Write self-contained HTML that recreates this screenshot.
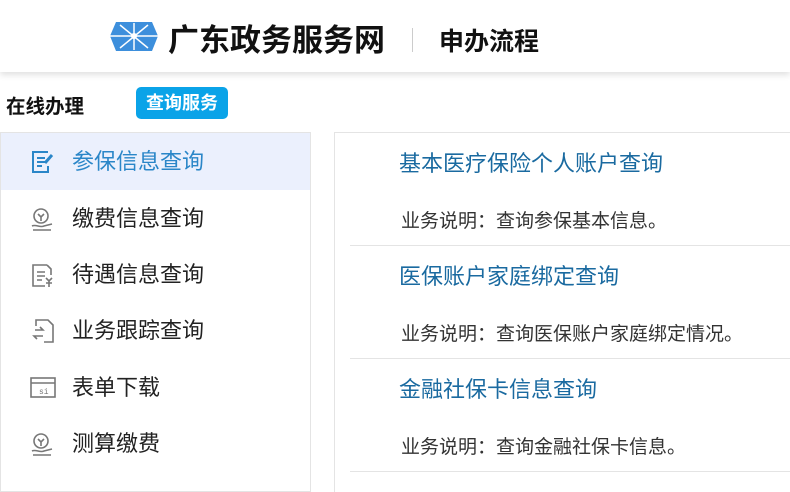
<!DOCTYPE html>
<html><head><meta charset="utf-8"><style>
*{margin:0;padding:0;box-sizing:border-box}
body{width:790px;height:477px;overflow:hidden;background:#fff;font-family:"Liberation Sans","Noto Sans CJK SC",sans-serif;position:relative}
.hdr{position:absolute;left:0;top:0;width:790px;height:72px;background:#fff;box-shadow:0 3px 6px rgba(0,0,0,.12)}
.t1{position:absolute;left:168px;top:15px;font-size:31px;font-weight:bold;color:#111;white-space:nowrap}
.sep{position:absolute;left:412px;top:28px;width:1px;height:24px;background:#ccc}
.t2{position:absolute;left:439px;top:22px;font-size:25px;font-weight:bold;color:#111;white-space:nowrap}
.zx{position:absolute;left:6px;top:90px;font-size:19.5px;font-weight:bold;color:#111}
.badge{position:absolute;left:136px;top:87px;width:92px;height:32px;background:#0aa3e8;border-radius:5px;color:#fff;font-weight:bold;font-size:18px;line-height:32px;text-align:center}
.left{position:absolute;left:0;top:132px;width:311px;height:360px;border:1px solid #e4e4e4}
.item{position:absolute;left:0;width:309px;height:57px;font-size:22px;color:#222;line-height:57px}
.item span{position:absolute;left:71px;white-space:nowrap}
.item svg{position:absolute;left:29px;top:16px}
.act{background:#ebf0fd;color:#2a86c8}
.right{position:absolute;left:334px;top:132px;width:470px;height:360px;border-left:1px solid #e4e4e4;border-top:1px solid #e4e4e4}
.row{position:absolute;left:15px;width:460px;height:113px;border-bottom:1px solid #e4e4e4}
.row .a{position:absolute;left:49px;top:13px;font-size:22px;color:#1a6aa0;white-space:nowrap}
.row .b{position:absolute;left:51px;top:73px;font-size:19px;color:#333;white-space:nowrap}
</style></head><body>
<div class="hdr">
<svg style="position:absolute;left:110px;top:22px" width="48" height="29" viewBox="0 0 48 29">
<polygon points="6,0 42,0 48,14 42,29 6,29 0,14" fill="#3d8fdc"/>
<g stroke="#fff" stroke-width="1.5"><line x1="24" y1="1" x2="24" y2="28"/><line x1="10" y1="3" x2="38" y2="26"/><line x1="38" y1="3" x2="10" y2="26"/><line x1="0" y1="14" x2="48" y2="14"/></g>
<circle cx="24" cy="14" r="3" fill="#fff"/></svg>
<div class="t1">广东政务服务网</div>
<div class="sep"></div>
<div class="t2">申办流程</div>
</div>
<div class="zx">在线办理</div>
<div class="badge">查询服务</div>
<div class="left">
<div class="item act" style="top:0"><svg width="26" height="26" viewBox="0 0 26 26" fill="none" stroke="#2a86c8" stroke-width="2"><path d="M18 3H3v20h15v-6"/><path d="M7 9h8M7 13h8M7 17h5"/><path d="M22 6l-7 8" stroke-width="3"/></svg><span>参保信息查询</span></div>
<div class="item" style="top:57px"><svg width="26" height="26" viewBox="0 0 26 26" fill="none" stroke="#777" stroke-width="1.6"><circle cx="11" cy="10" r="7"/><path d="M8 8l3 3 3-3M11 11v4"/><path d="M2 20c4-2 8 2 12 0l8-2M3 24h18"/></svg><span>缴费信息查询</span></div>
<div class="item" style="top:113px"><svg width="26" height="26" viewBox="0 0 26 26" fill="none" stroke="#777" stroke-width="1.6"><path d="M17 3H3v21h12M17 3l4 4v6"/><path d="M7 10h8M7 14h8M7 18h5"/><path d="M16 16l3 3 3-3M19 19v6M16 21h6"/></svg><span>待遇信息查询</span></div>
<div class="item" style="top:169px"><svg width="26" height="26" viewBox="0 0 26 26" fill="none" stroke="#777" stroke-width="1.6"><path d="M6 8V2h12l5 5v17H14"/><path d="M5 12h8l-3-3M13 18H4l3 3"/></svg><span>业务跟踪查询</span></div>
<div class="item" style="top:226px"><svg width="26" height="26" viewBox="0 0 26 26" fill="none" stroke="#777" stroke-width="1.6"><rect x="1" y="3" width="24" height="19"/><path d="M1 8h24"/><text x="9" y="19" font-size="8" fill="#777" stroke="none" font-family="Liberation Mono">si</text></svg><span>表单下载</span></div>
<div class="item" style="top:282px"><svg width="26" height="26" viewBox="0 0 26 26" fill="none" stroke="#777" stroke-width="1.6"><circle cx="11" cy="10" r="7"/><path d="M8 8l3 3 3-3M11 11v4"/><path d="M2 20c4-2 8 2 12 0l8-2M3 24h18"/></svg><span>测算缴费</span></div>
</div>
<div class="right">
<div class="row" style="top:0"><div class="a">基本医疗保险个人账户查询</div><div class="b">业务说明：查询参保基本信息。</div></div>
<div class="row" style="top:113px"><div class="a">医保账户家庭绑定查询</div><div class="b">业务说明：查询医保账户家庭绑定情况。</div></div>
<div class="row" style="top:226px"><div class="a">金融社保卡信息查询</div><div class="b">业务说明：查询金融社保卡信息。</div></div>
</div>
</body></html>
